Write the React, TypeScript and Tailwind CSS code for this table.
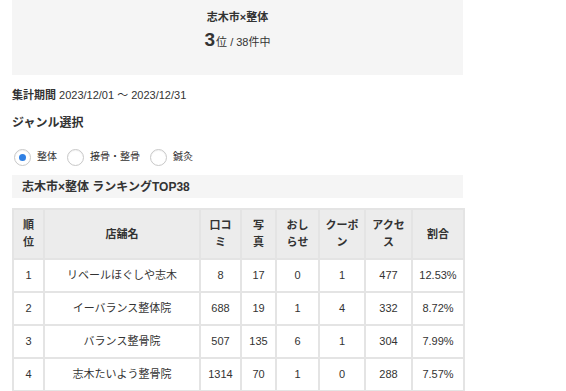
import React from "react";

const rows = [
  { rank: 1, name: "リベールほぐしや志木", review: 8, photo: 17, news: 0, coupon: 1, access: 477, rate: "12.53%" },
  { rank: 2, name: "イーバランス整体院", review: 688, photo: 19, news: 1, coupon: 4, access: 332, rate: "8.72%" },
  { rank: 3, name: "バランス整骨院", review: 507, photo: 135, news: 6, coupon: 1, access: 304, rate: "7.99%" },
  { rank: 4, name: "志木たいよう整骨院", review: 1314, photo: 70, news: 1, coupon: 0, access: 288, rate: "7.57%" },
];

function Radio({ label, checked }: { label: string; checked?: boolean }) {
  return (
    <label className="flex items-center gap-[6px] mr-[10px]">
      <span className="w-[17px] h-[17px] rounded-full border border-[#c8c8c8] bg-white flex items-center justify-center shadow-[inset_0_1px_1px_rgba(0,0,0,0.05)]">
        {checked && <span className="w-[7px] h-[7px] rounded-full bg-[#2f80e4]" />}
      </span>
      <span className="text-[10px] leading-[18px]">{label}</span>
    </label>
  );
}

export default function App() {
  const th = "border-2 border-[#e4e4e4] bg-[#ececec] font-bold text-[11px] leading-[17px] text-center align-middle p-0";
  const td = "border-2 border-[#e4e4e4] text-[11px] text-center align-middle p-0 h-[33px]";
  return (
    <div className="w-[566px] h-[391px] overflow-hidden bg-white text-[#333] font-['Liberation_Sans','Noto_Sans_CJK_JP',sans-serif]">
      <div className="ml-[12px] w-[451px]">
        {/* ranking summary */}
        <div className="h-[75px] bg-[#f5f5f5] flex flex-col items-center pt-[9px]">
          <div className="text-[11px] font-bold leading-[16px]">志木市×整体</div>
          <div className="mt-[4px] flex items-baseline leading-[22px]">
            <span className="text-[19px] font-bold">3</span>
            <span className="text-[11px] ml-[1px]">位 / 38件中</span>
          </div>
        </div>

        <div className="mt-[12px] text-[11px] leading-[16px]">
          <span className="font-bold">集計期間</span> 2023/12/01 〜 2023/12/31
        </div>

        <div className="mt-[11px] text-[12px] font-bold leading-[18px]">ジャンル選択</div>

        <div className="mt-[16px] flex items-center pl-[2px]">
          <Radio label="整体" checked />
          <Radio label="接骨・整骨" />
          <Radio label="鍼灸" />
        </div>

        <div className="mt-[9px] h-[23px] bg-[#f5f5f5] px-[10px] flex items-center text-[12px] font-bold">
          志木市×整体 ランキングTOP38
        </div>

        <table className="mt-[10px] w-[451px] table-fixed border-collapse">
          <colgroup>
            <col className="w-[31px]" />
            <col className="w-[156px]" />
            <col className="w-[41px]" />
            <col className="w-[35px]" />
            <col className="w-[43px]" />
            <col className="w-[46px]" />
            <col className="w-[47px]" />
            <col className="w-[52px]" />
          </colgroup>
          <thead>
            <tr className="h-[50px]">
              <th className={th}>順<br />位</th>
              <th className={th}>店舗名</th>
              <th className={th}>口コ<br />ミ</th>
              <th className={th}>写<br />真</th>
              <th className={th}>おし<br />らせ</th>
              <th className={th}>クーポ<br />ン</th>
              <th className={th}>アクセ<br />ス</th>
              <th className={th}>割合</th>
            </tr>
          </thead>
          <tbody>
            {rows.map((r) => (
              <tr key={r.rank}>
                <td className={td}>{r.rank}</td>
                <td className={td}>{r.name}</td>
                <td className={td}>{r.review}</td>
                <td className={td}>{r.photo}</td>
                <td className={td}>{r.news}</td>
                <td className={td}>{r.coupon}</td>
                <td className={td}>{r.access}</td>
                <td className={td}>{r.rate}</td>
              </tr>
            ))}
          </tbody>
        </table>
      </div>
    </div>
  );
}
